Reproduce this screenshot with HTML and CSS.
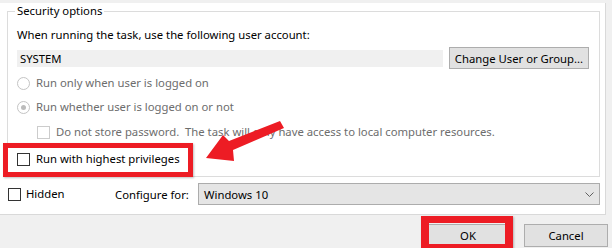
FILE: index.html
```html
<!DOCTYPE html>
<html lang="en">

<head>
    <meta charset="UTF-8">
    <title>Task Properties - Security options</title>
    <link rel="stylesheet" href="styles.css">
</head>

<body>
    <div class="panel">
        <fieldset class="security">
            <legend>Security options</legend>
            <div class="line">When running the task, use the following user account:</div>
            <div class="account">
                <div class="account-name">SYSTEM</div>
                <button class="btn change-btn">Change User or Group...</button>
            </div>
            <div class="option disabled opt-only"><span class="radio"></span>Run only when user is logged on</div>
            <div class="option disabled opt-whether"><span class="radio checked"></span>Run whether user is logged on or not</div>
            <div class="option disabled opt-store"><span class="check"></span>Do not store password.&nbsp; The task will only have access to local computer resources.</div>
            <div class="option opt-highest"><span class="check"></span>Run with highest privileges</div>
        </fieldset>

        <div class="config-row">
            <div class="option opt-hidden"><span class="check"></span>Hidden</div>
            <span class="config-label">Configure for:</span>
            <div class="select">
                <span>Windows 10</span>
                <svg class="chevron" width="9" height="5" viewBox="0 0 9 5">
                    <polyline points="0.5,0.5 4.5,4.5 8.5,0.5" fill="none" stroke="#606060" stroke-width="1" />
                </svg>
            </div>
        </div>
    </div>

    <div class="footer">
        <button class="btn ok-btn">OK</button>
        <button class="btn cancel-btn">Cancel</button>
    </div>

    <!-- annotations drawn over the screenshot -->
    <div class="mark mark-highest"></div>
    <div class="mark mark-ok"></div>
    <svg class="arrow" width="612" height="248" viewBox="0 0 612 248">
        <polygon points="206,158 223,135 229,141 280,121 284,128 233,150 234,161" fill="#ed1c24" />
    </svg>
</body>

</html>
```

FILE: styles.css
```css
body {
    margin: 0;
    width: 612px;
    height: 248px;
    overflow: hidden;
    position: relative;
    background: #f0f0f0;
    font-family: 'Noto Sans', sans-serif;
    font-size: 11.3px;
    color: #000;
}

.panel {
    width: 605px;
    height: 211px;
    background: #fff;
    border-right: 1px solid #d9d9d9;
    border-bottom: 1px solid #d9d9d9;
}

.security {
    margin: 3px 5px 0 7px;
    padding: 0 5px 9px 9px;
    border: 1px solid #dcdcdc;
    min-width: 0;
}

.security legend {
    margin-left: -2px;
    padding: 0 2px;
    line-height: 16px;
}

.line {
    margin-top: 8px;
    line-height: 16px;
}

.account {
    display: flex;
    align-items: center;
    margin-top: 4px;
    height: 22px;
}

.account-name {
    width: 423px;
    height: 17px;
    line-height: 17px;
    padding-left: 3px;
    background: #f0f0f0;
}

.btn {
    font-family: 'Noto Sans', sans-serif;
    font-size: 11.3px;
    color: #000;
    background: #e1e1e1;
    border: 1px solid #adadad;
    padding: 0;
    margin: 0;
}

.change-btn {
    margin-left: 6px;
    width: 140px;
    height: 22px;
}

.option {
    display: flex;
    align-items: center;
    line-height: 16px;
}

.option.disabled {
    color: #6d6d6d;
}

.radio {
    width: 11px;
    height: 11px;
    border: 1px solid #c4c4c4;
    border-radius: 50%;
    margin-right: 6px;
    position: relative;
}

.radio.checked::after {
    content: "";
    position: absolute;
    left: 3px;
    top: 3px;
    width: 5px;
    height: 5px;
    border-radius: 50%;
    background: #bcbcbc;
}

.check {
    width: 11px;
    height: 11px;
    border: 1px solid #333;
    background: #fff;
    margin-right: 6px;
}

.disabled .check {
    border-color: #cccccc;
}

.opt-only {
    margin-top: 6px;
}

.opt-whether {
    margin-top: 8px;
}

.opt-store {
    margin-top: 9px;
    padding-left: 20px;
}

.opt-highest {
    margin-top: 11px;
}

.config-row {
    display: flex;
    align-items: center;
    height: 22px;
    margin-top: 6px;
    padding-left: 8px;
}

.opt-hidden {
    width: 107px;
}

.opt-hidden .check {
    margin-right: 5px;
}

.config-label {
    width: 83px;
}

.select {
    display: flex;
    align-items: center;
    justify-content: space-between;
    box-sizing: border-box;
    width: 402px;
    height: 22px;
    padding: 0 5px 0 5px;
    background: #e5e5e5;
    border: 1px solid #acacac;
}

.footer {
    display: flex;
    justify-content: flex-end;
    gap: 14px;
    padding: 9px 4px 0 0;
}

.ok-btn,
.cancel-btn {
    width: 84px;
    height: 23px;
}

.mark {
    position: absolute;
    box-sizing: border-box;
    border: 5px solid #ed1c24;
    box-shadow: 1px 1px 2px rgba(0, 0, 0, 0.25);
}

.mark-highest {
    left: 3px;
    top: 143px;
    width: 190px;
    height: 34px;
}

.mark-ok {
    left: 421px;
    top: 216px;
    width: 92px;
    height: 34px;
    border-width: 7px 8px 6px 8px;
}

.arrow {
    position: absolute;
    left: 0;
    top: 0;
    pointer-events: none;
}
```
